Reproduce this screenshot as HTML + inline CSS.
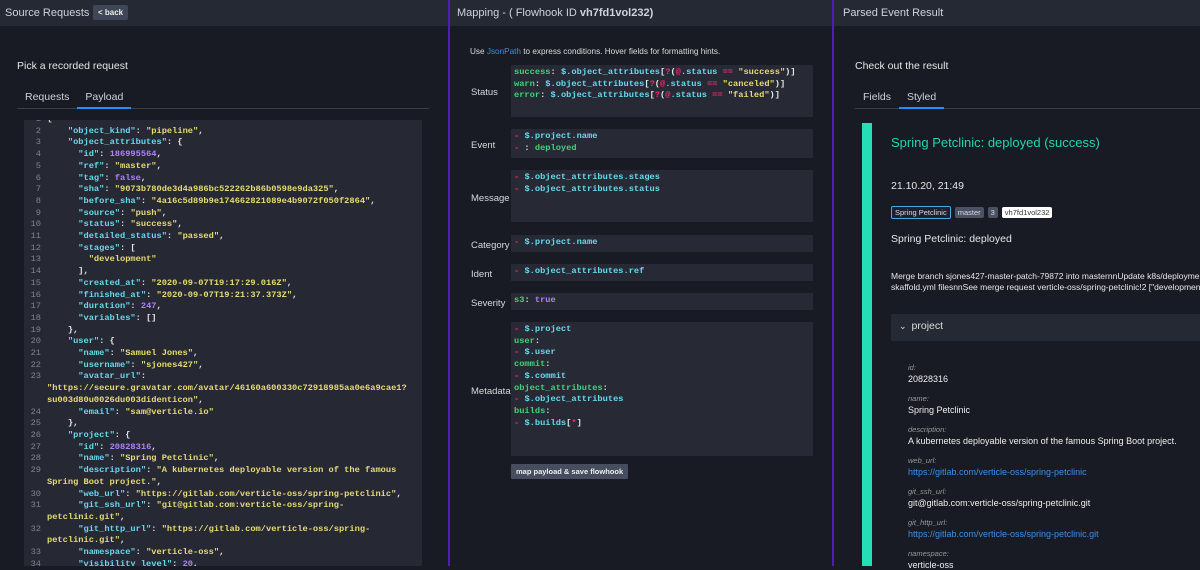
<!DOCTYPE html>
<html><head><meta charset="utf-8"><style>
*{margin:0;padding:0;box-sizing:border-box}
body{width:1200px;height:566px;overflow:hidden;background:#181b23;font-family:"Liberation Sans",sans-serif;color:#e6e6e6;position:relative}
.p{position:absolute;top:0;height:566px;overflow:hidden}
.hd{height:26px;background:#252934;font-size:11px;color:#d0d3da;padding:7px 0 0 5px;position:relative}
.div{position:absolute;top:0;width:2px;height:566px;background:#4a1fb8}
.mono{font-family:"Liberation Mono",monospace;font-weight:bold;font-size:8.7px;line-height:11.7px;white-space:pre}
.k{color:#66d9ef}.s{color:#e6db74}.n{color:#ae81ff}.g{color:#3ed47a}.d{color:#f92672}.w{color:#d8d8d8}
.ln{display:inline-block;width:17px;text-align:right;color:#80838c;font-weight:normal;margin-right:6px}
.tabs{position:absolute;font-size:10.5px;color:#cfd2d8;border-bottom:1px solid #3a3e48}
.tabs span{display:inline-block;padding:0 8px 4px;}
.tabs .a{border-bottom:2px solid #1e90ff;margin-bottom:-1px}
.lab{position:absolute;left:471px;font-size:9.5px;color:#d6d8dc}
.box{position:absolute;left:511px;width:302px;background:#272a35;padding:2px 3px}
.f{position:absolute;left:908px;font-size:9px;color:#eee}
.f i{display:block;font-size:7.5px;color:#999;margin-bottom:2px}
.tag{display:inline-block;font-size:7.5px;padding:1px 3px;border-radius:2px;margin-right:4px;background:#4a5263;color:#ddd}
a{color:#3b8fe8;text-decoration:none}
</style></head><body>
<div class="p" style="left:0;width:448px">
<div class="hd">Source Requests <span style="position:absolute;left:93px;top:5px;background:#3f4655;font-size:8px;font-weight:bold;padding:3px 5px;border-radius:2px;color:#eee">&lt; back</span></div>
<div style="position:absolute;left:17px;top:60px;font-size:10.5px">Pick a recorded request</div>
<div class="tabs" style="left:17px;top:91px;width:412px"><span>Requests</span><span class="a">Payload</span></div>
<div class="mono" style="position:absolute;left:24px;top:120px;width:398px;height:446px;background:#262934;padding-top:0px;overflow:hidden"><div style="margin-top:-6px"><span class="ln">1</span><span class="w">{</span>
<span class="ln">2</span>    <span class="k">"object_kind"</span>: <span class="s">"pipeline"</span>,
<span class="ln">3</span>    <span class="k">"object_attributes"</span>: {
<span class="ln">4</span>      <span class="k">"id"</span>: <span class="n">186995564</span>,
<span class="ln">5</span>      <span class="k">"ref"</span>: <span class="s">"master"</span>,
<span class="ln">6</span>      <span class="k">"tag"</span>: <span class="n">false</span>,
<span class="ln">7</span>      <span class="k">"sha"</span>: <span class="s">"9073b780de3d4a986bc522262b86b0598e9da325"</span>,
<span class="ln">8</span>      <span class="k">"before_sha"</span>: <span class="s">"4a16c5d89b9e174662821089e4b9072f050f2864"</span>,
<span class="ln">9</span>      <span class="k">"source"</span>: <span class="s">"push"</span>,
<span class="ln">10</span>      <span class="k">"status"</span>: <span class="s">"success"</span>,
<span class="ln">11</span>      <span class="k">"detailed_status"</span>: <span class="s">"passed"</span>,
<span class="ln">12</span>      <span class="k">"stages"</span>: [
<span class="ln">13</span>        <span class="s">"development"</span>
<span class="ln">14</span>      ],
<span class="ln">15</span>      <span class="k">"created_at"</span>: <span class="s">"2020-09-07T19:17:29.016Z"</span>,
<span class="ln">16</span>      <span class="k">"finished_at"</span>: <span class="s">"2020-09-07T19:21:37.373Z"</span>,
<span class="ln">17</span>      <span class="k">"duration"</span>: <span class="n">247</span>,
<span class="ln">18</span>      <span class="k">"variables"</span>: []
<span class="ln">19</span>    },
<span class="ln">20</span>    <span class="k">"user"</span>: {
<span class="ln">21</span>      <span class="k">"name"</span>: <span class="s">"Samuel Jones"</span>,
<span class="ln">22</span>      <span class="k">"username"</span>: <span class="s">"sjones427"</span>,
<span class="ln">23</span>      <span class="k">"avatar_url"</span>:
<span class="ln"></span><span class="s">"https://secure.gravatar.com/avatar/46160a600330c72918985aa0e6a9cae1?</span>
<span class="ln"></span><span class="s">su003d80u0026du003didenticon"</span>,
<span class="ln">24</span>      <span class="k">"email"</span>: <span class="s">"sam@verticle.io"</span>
<span class="ln">25</span>    },
<span class="ln">26</span>    <span class="k">"project"</span>: {
<span class="ln">27</span>      <span class="k">"id"</span>: <span class="n">20828316</span>,
<span class="ln">28</span>      <span class="k">"name"</span>: <span class="s">"Spring Petclinic"</span>,
<span class="ln">29</span>      <span class="k">"description"</span>: <span class="s">"A kubernetes deployable version of the famous</span>
<span class="ln"></span><span class="s">Spring Boot project."</span>,
<span class="ln">30</span>      <span class="k">"web_url"</span>: <span class="s">"https://gitlab.com/verticle-oss/spring-petclinic"</span>,
<span class="ln">31</span>      <span class="k">"git_ssh_url"</span>: <span class="s">"git@gitlab.com:verticle-oss/spring-</span>
<span class="ln"></span><span class="s">petclinic.git"</span>,
<span class="ln">32</span>      <span class="k">"git_http_url"</span>: <span class="s">"https://gitlab.com/verticle-oss/spring-</span>
<span class="ln"></span><span class="s">petclinic.git"</span>,
<span class="ln">33</span>      <span class="k">"namespace"</span>: <span class="s">"verticle-oss"</span>,
<span class="ln">34</span>      <span class="k">"visibility_level"</span>: <span class="n">20</span>,</div></div>
</div>
<div class="div" style="left:448px"></div>
<div class="p" style="left:450px;width:382px">
<div class="hd" style="padding-left:7px">Mapping - ( Flowhook ID <b>vh7fd1vol232)</b></div>
</div>
<div style="position:absolute;left:470px;top:47px;font-size:8.2px;color:#ddd">Use <a>JsonPath</a> to express conditions. Hover fields for formatting hints.</div>
<div class="lab" style="top:87px">Status</div>
<div class="box mono" style="top:65px;height:52px"><span class="g">success</span>: <span class="k">$.object_attributes</span>[<span class="d">?</span>(<span class="d">@</span><span class="k">.status</span> <span class="d">==</span> <span class="s">"success"</span>)]
<span class="g">warn</span>: <span class="k">$.object_attributes</span>[<span class="d">?</span>(<span class="d">@</span><span class="k">.status</span> <span class="d">==</span> <span class="s">"canceled"</span>)]
<span class="g">error</span>: <span class="k">$.object_attributes</span>[<span class="d">?</span>(<span class="d">@</span><span class="k">.status</span> <span class="d">==</span> <span class="s">"failed"</span>)]</div>
<div class="lab" style="top:140px">Event</div>
<div class="box mono" style="top:129px;height:29px"><span class="d">-</span> <span class="k">$.project.name</span>
<span class="d">-</span> : <span class="g">deployed</span></div>
<div class="lab" style="top:193px">Message</div>
<div class="box mono" style="top:170px;height:52px"><span class="d">-</span> <span class="k">$.object_attributes.stages</span>
<span class="d">-</span> <span class="k">$.object_attributes.status</span></div>
<div class="lab" style="top:240px">Category</div>
<div class="box mono" style="top:235px;height:17px"><span class="d">-</span> <span class="k">$.project.name</span></div>
<div class="lab" style="top:269px">Ident</div>
<div class="box mono" style="top:264px;height:17px"><span class="d">-</span> <span class="k">$.object_attributes.ref</span></div>
<div class="lab" style="top:298px">Severity</div>
<div class="box mono" style="top:293px;height:17px"><span class="g">s3</span>: <span class="n">true</span></div>
<div class="lab" style="top:386px">Metadata</div>
<div class="box mono" style="top:322px;height:134px"><span class="d">-</span> <span class="k">$.project</span>
<span class="g">user</span>:
<span class="d">-</span> <span class="k">$.user</span>
<span class="g">commit</span>:
<span class="d">-</span> <span class="k">$.commit</span>
<span class="g">object_attributes</span>:
<span class="d">-</span> <span class="k">$.object_attributes</span>
<span class="g">builds</span>:
<span class="d">-</span> <span class="k">$.builds</span>[<span class="d">*</span>]</div>
<div style="position:absolute;left:511px;top:464px;width:117px;height:15px;background:#454d5e;font-size:7.5px;font-weight:bold;color:#eee;padding:3px 0 0 5px;border-radius:1px">map payload &amp; save flowhook</div>
<div class="div" style="left:832px"></div>
<div class="p" style="left:834px;width:366px">
<div class="hd" style="padding-left:9px">Parsed Event Result</div>
<div style="position:absolute;left:21px;top:60px;font-size:10.5px">Check out the result</div>
<div class="tabs" style="left:21px;top:91px;width:360px"><span>Fields</span><span class="a">Styled</span></div>
<div style="position:absolute;left:28px;top:123px;width:10px;height:443px;background:#25e0b7"></div>
<div style="position:absolute;left:57px;top:135px;font-size:13px;color:#25d3b0">Spring Petclinic: deployed (success)</div>
<div style="position:absolute;left:57px;top:180px;font-size:10.5px">21.10.20, 21:49</div>
<div style="position:absolute;left:57px;top:202px"><span class="tag" style="background:#1c2030;border:1px solid #4aa8e0;color:#ddd">Spring Petclinic</span><span class="tag">master</span><span class="tag">3</span><span class="tag" style="background:#fff;color:#333">vh7fd1vol232</span></div>
<div style="position:absolute;left:57px;top:233px;font-size:10.5px">Spring Petclinic: deployed</div>
<div style="position:absolute;left:57px;top:271px;font-size:8.5px;line-height:11px;white-space:nowrap">Merge branch sjones427-master-patch-79872 into masternnUpdate k8s/deployment<br>skaffold.yml filesnnSee merge request verticle-oss/spring-petclinic!2 ["development"]</div>
<div style="position:absolute;left:57px;top:314px;width:320px;height:27px;background:#252934;font-size:10.5px;padding:6px 0 0 8px;color:#ddd"><span style="font-size:9px;margin-right:5px">&#8964;</span>project</div>
</div>
<div class="f" style="top:363px"><i>id:</i>20828316</div>
<div class="f" style="top:394px"><i>name:</i>Spring Petclinic</div>
<div class="f" style="top:425px"><i>description:</i>A kubernetes deployable version of the famous Spring Boot project.</div>
<div class="f" style="top:456px"><i>web_url:</i><a>https://gitlab.com/verticle-oss/spring-petclinic</a></div>
<div class="f" style="top:487px"><i>git_ssh_url:</i>git@gitlab.com:verticle-oss/spring-petclinic.git</div>
<div class="f" style="top:518px"><i>git_http_url:</i><a>https://gitlab.com/verticle-oss/spring-petclinic.git</a></div>
<div class="f" style="top:549px"><i>namespace:</i>verticle-oss</div>
</body></html>
